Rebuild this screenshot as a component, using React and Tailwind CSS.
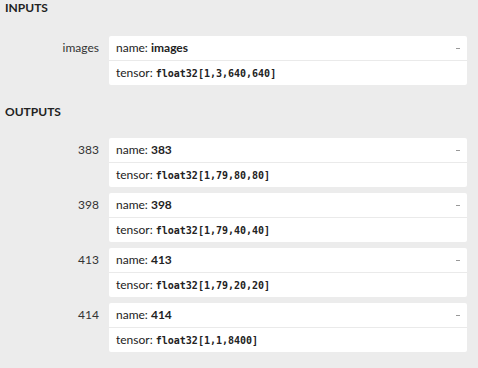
const inputs = [{ label: 'images', name: 'images', type: 'float32[1,3,640,640]' }];

const outputs = [
  { label: '383', name: '383', type: 'float32[1,79,80,80]' },
  { label: '398', name: '398', type: 'float32[1,79,40,40]' },
  { label: '413', name: '413', type: 'float32[1,79,20,20]' },
  { label: '414', name: '414', type: 'float32[1,1,8400]' },
];

const Argument = ({ item }) => (
  <div className="flex items-start">
    <div className="w-[99px] shrink-0 text-right leading-[24px] text-[#333]">{item.label}</div>
    <div className="ml-[10px] w-[358px] rounded-[2px] bg-white">
      <div className="flex h-[24px] items-center justify-between px-[7px]">
        <span>
          name: <b className="font-bold">{item.name}</b>
        </span>
        <span className="h-px w-[4px] bg-[#999]" />
      </div>
      <div className="flex h-[25px] items-center border-t border-[#eaeaea] px-[7px]">
        <span>tensor:&nbsp;</span>
        <span className="font-['DejaVu_Sans_Mono','Liberation_Mono',monospace] text-[10px] font-semibold">
          {item.type}
        </span>
      </div>
    </div>
  </div>
);

const App = () => {
  return (
    <div className="h-[368px] w-[478px] overflow-hidden bg-[#ececec] font-['Lato',sans-serif] text-[12px] text-[#222]">
      <div className="px-[5px] text-[12px] font-bold leading-[16px]">INPUTS</div>
      <div className="mt-[20px] flex flex-col gap-[6px]">
        {inputs.map((item) => (
          <Argument key={item.label} item={item} />
        ))}
      </div>
      <div className="mt-[19px] px-[5px] text-[12px] font-bold leading-[16px]">OUTPUTS</div>
      <div className="mt-[18px] flex flex-col gap-[6px]">
        {outputs.map((item) => (
          <Argument key={item.label} item={item} />
        ))}
      </div>
    </div>
  );
};

export default App;
